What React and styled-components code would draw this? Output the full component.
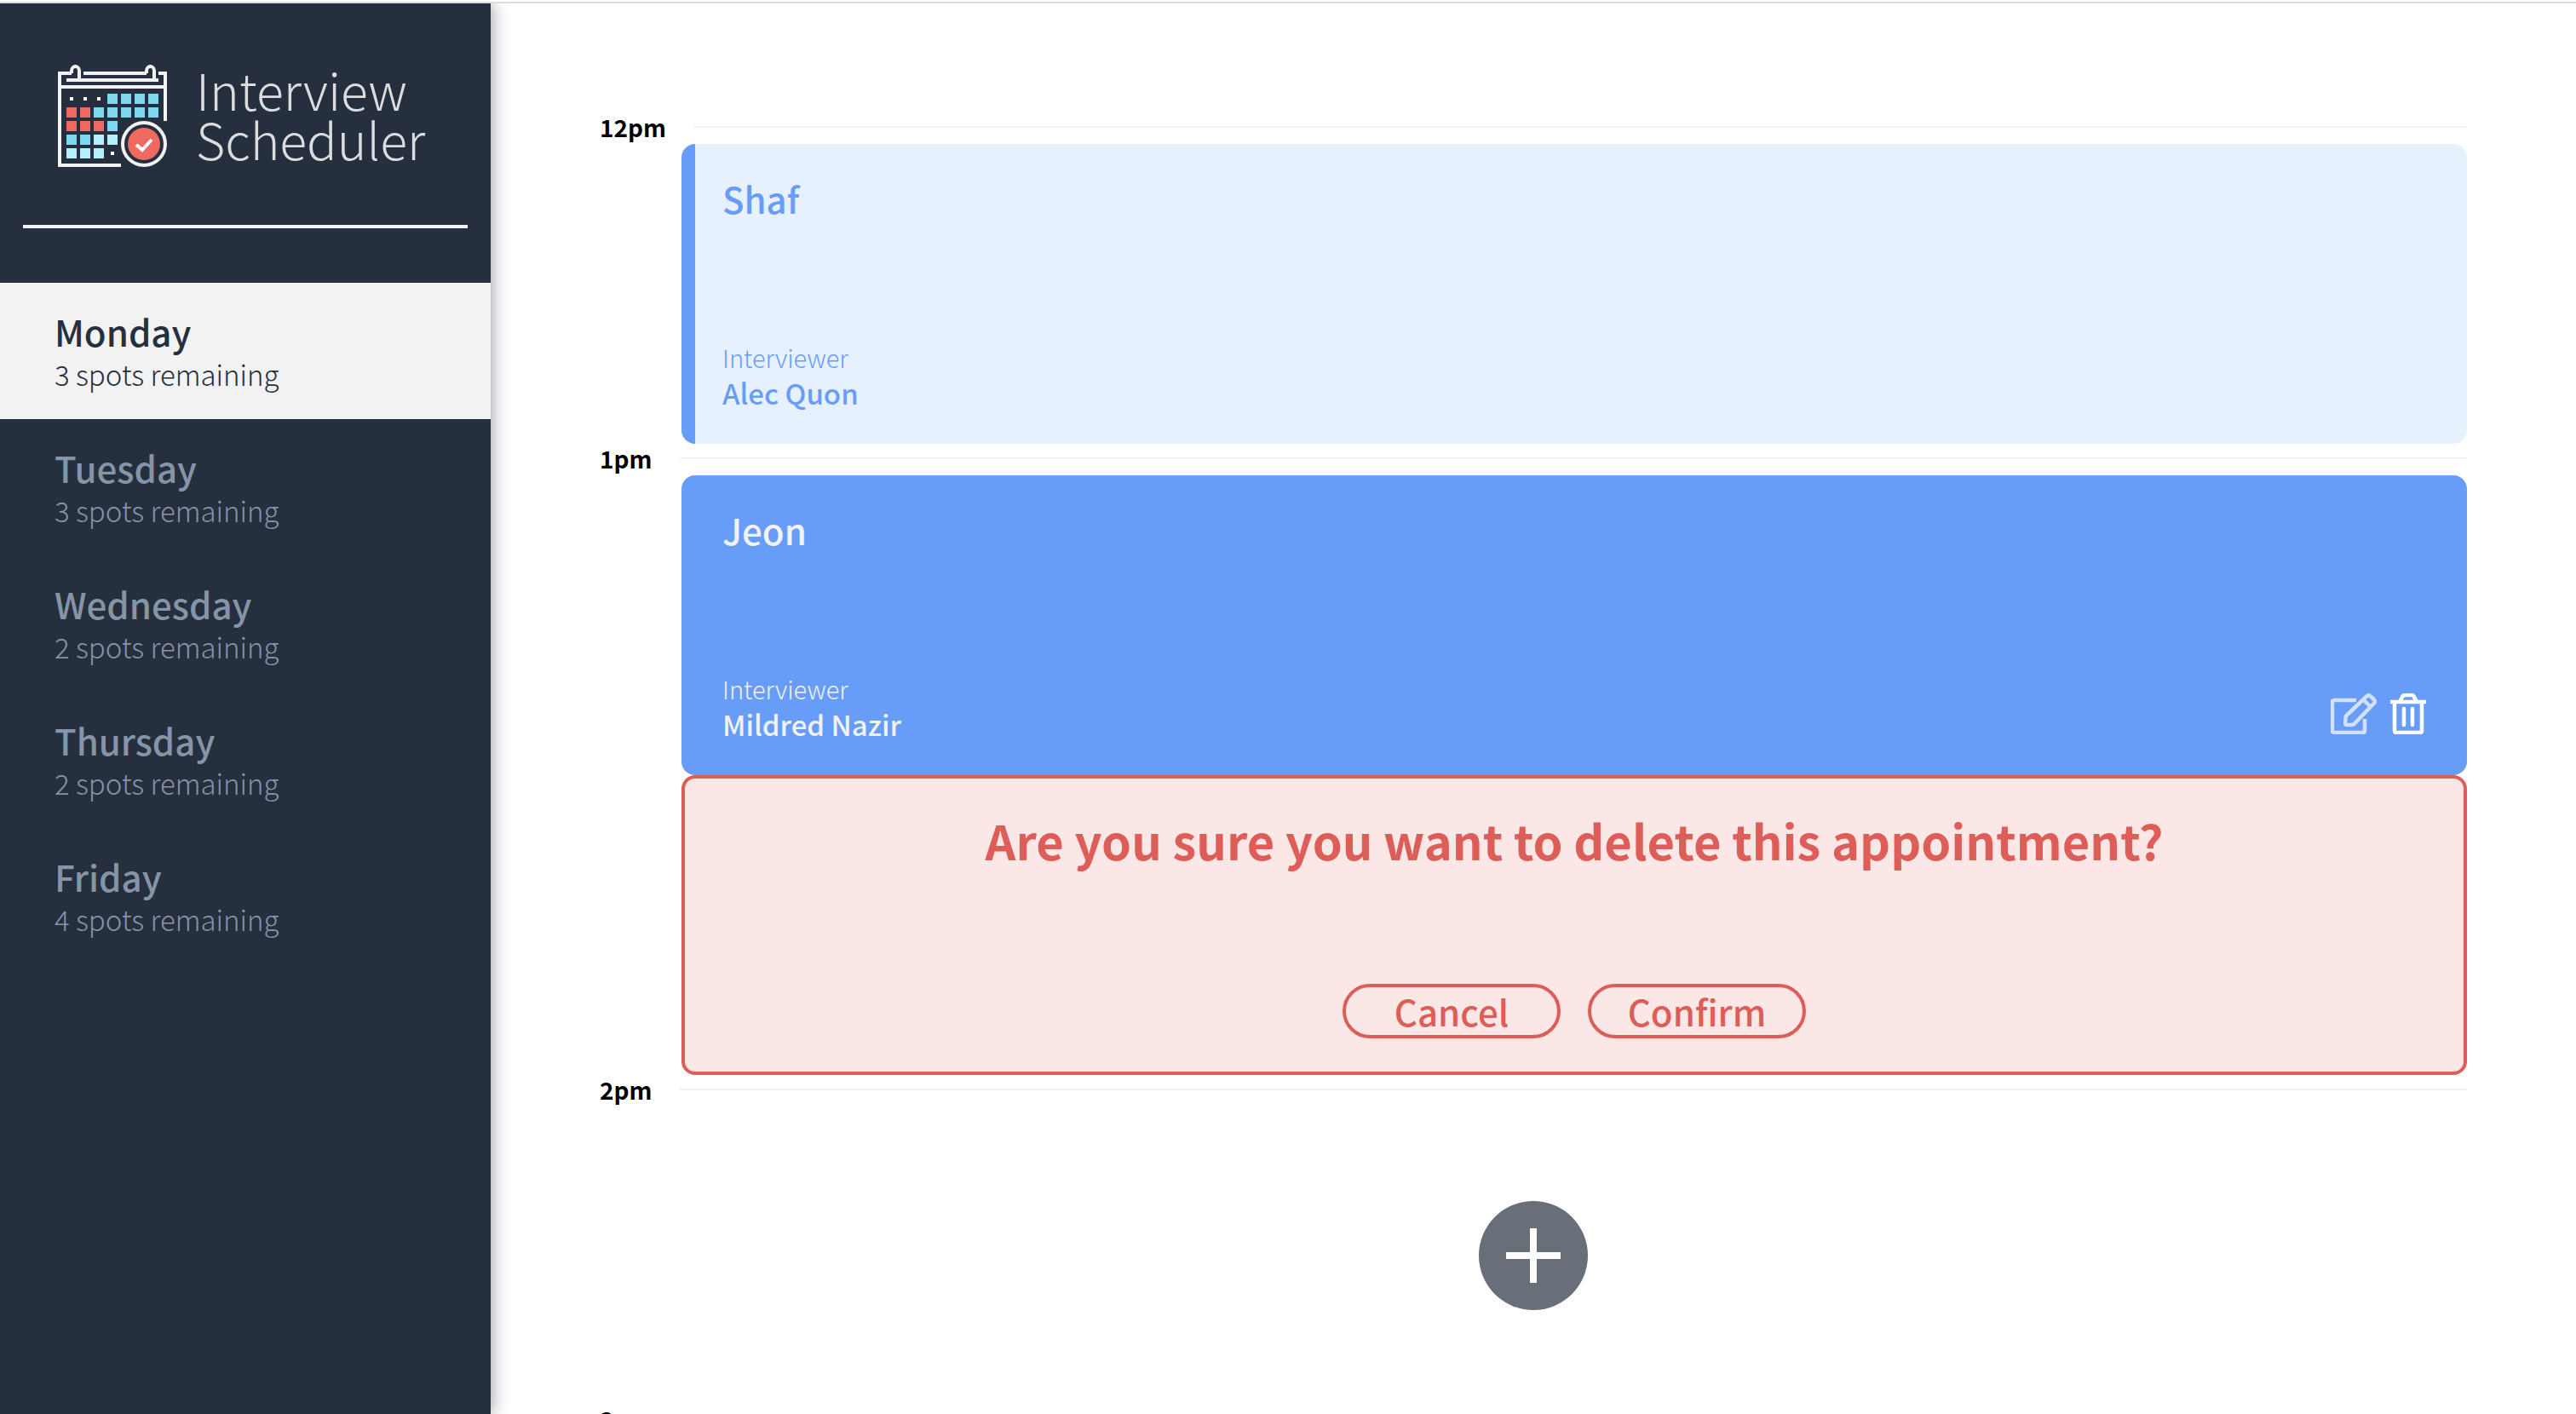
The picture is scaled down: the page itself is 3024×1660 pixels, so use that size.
import React, { useState } from "react";
import styled, { createGlobalStyle, css } from "styled-components";

const color = {
  navy: "#252f3e",
  mist: "#f2f2f2",
  slate: "#8594a7",
  blue: "#679df8",
  sky: "#e7f1fe",
  red: "#dd5d58",
  blush: "#fae7e6",
};

const GlobalStyle = createGlobalStyle`
  *, *::before, *::after { box-sizing: border-box; }
  html, body, #root { height: 100%; }
  body {
    margin: 0;
    padding-top: 2px;
    background: #fff;
    color: #000;
    font-family: "Noto Sans CJK SC", "Noto Sans", sans-serif;
    overflow: hidden;
  }
  h1, h2, h3, h4, p, ul { margin: 0; padding: 0; }
  button { font: inherit; color: inherit; cursor: pointer; }
`;

const Layout = styled.div`
  display: flex;
  height: 100%;
  border-top: 2px solid #dcdcdc;
  overflow: hidden;
`;

const Sidebar = styled.aside`
  flex: none;
  width: 576px;
  background: ${color.navy};
  box-shadow: 2px 0 18px rgba(37, 47, 62, 0.45);
  z-index: 1;
`;

const Brand = styled.h1`
  display: flex;
  align-items: flex-start;
  gap: 34px;
  padding: 72px 64px 68px 68px;
  color: #dcdde0;
  font-size: 59px;
  font-weight: 300;
  line-height: 58px;
`;

const BrandWord = styled.span`
  display: block;
`;

const Divider = styled.hr`
  height: 4px;
  margin: 0 27px 64px;
  border: 0;
  background: ${color.mist};
`;

const DayList = styled.ul`
  list-style: none;
`;

const DayButton = styled.button`
  display: block;
  width: 100%;
  height: 160px;
  padding: 32px 64px;
  border: 0;
  text-align: left;
  background: ${(p) => (p.$selected ? color.mist : "transparent")};
  color: ${(p) => (p.$selected ? color.navy : color.slate)};
`;

const DayName = styled.span`
  display: block;
  font-size: 42px;
  font-weight: 500;
  line-height: 50px;
`;

const DaySpots = styled.span`
  display: block;
  font-size: 33px;
  font-weight: 300;
  line-height: 50px;
`;

const Schedule = styled.main`
  flex: 1;
  min-width: 0;
  padding: 128px 128px 0;
  overflow: hidden;
`;

const Slot = styled.article`
  display: block;
`;

const SlotHeader = styled.header`
  display: flex;
  align-items: center;
  gap: 32px;
  height: 37px;
  padding-bottom: 3px;
`;

const Time = styled.h2`
  font-size: 28px;
  font-weight: 700;
  line-height: 34px;
`;

const Rule = styled.hr`
  flex: 1;
  height: 2px;
  margin: 0;
  border: 0;
  background: ${color.mist};
`;

const card = css`
  display: flex;
  flex-direction: column;
  justify-content: space-between;
  height: 352px;
  margin-left: 96px;
  border-radius: 16px;
`;

const Card = styled.section`
  ${card}
  padding: 32px 48px 38px;
  background: ${(p) => (p.$active ? color.blue : color.sky)};
  color: ${(p) => (p.$active ? color.mist : color.blue)};
  ${(p) =>
    !p.$active &&
    css`
      padding-left: 32px;
      border-left: 16px solid ${color.blue};
    `}
`;

const Student = styled.h3`
  font-size: 42px;
  font-weight: 500;
  line-height: 64px;
`;

const CardFooter = styled.div`
  display: flex;
  align-items: flex-end;
  justify-content: space-between;
`;

const Label = styled.h4`
  font-size: 29px;
  font-weight: 300;
  line-height: 40px;
`;

const Interviewer = styled.p`
  font-size: 33px;
  font-weight: 500;
  line-height: 44px;
`;

const Actions = styled.div`
  display: flex;
  gap: 16px;
  padding-bottom: 10px;
`;

const IconButton = styled.button`
  display: flex;
  padding: 0;
  border: 0;
  background: none;
  color: #fff;
  opacity: ${(p) => (p.$hovered ? 1 : 0.7)};
`;

const ConfirmCard = styled.section`
  ${card}
  align-items: center;
  padding: 32px 48px 39px;
  border: 4px solid ${color.red};
  background: ${color.blush};
  color: ${color.red};
`;

const Question = styled.h3`
  font-size: 56px;
  font-weight: 700;
  line-height: 80px;
`;

const Choices = styled.div`
  display: flex;
  gap: 32px;
`;

const Choice = styled.button`
  width: 256px;
  height: 64px;
  padding: 0;
  border: 4px solid ${color.red};
  border-radius: 32px;
  background: none;
  font-size: 42px;
  font-weight: 500;
  line-height: 56px;
`;

const EmptySlot = styled.section`
  display: flex;
  align-items: center;
  justify-content: center;
  height: 350px;
`;

const AddButton = styled.button`
  display: flex;
  padding: 0;
  border: 0;
  border-radius: 50%;
  background: none;
`;

const cells = [
  "...bbbb",
  "rrbbbbb",
  "rrrb",
  "bbll",
  "lll.",
];
const cellFill = { r: "#ee6a61", b: "#7cd8ef", l: "#b7eefb" };

function CalendarLogo() {
  return (
    <svg width="128" height="120" viewBox="0 0 128 120" fill="none" aria-hidden="true">
      <g stroke={color.mist} strokeWidth="4">
        <path d="M16 10H2v108h72M30 10h74M118 10h8v56M10 18h108M2 26h124" />
        <path d="M16 10V7a4.500 5 0 0 1 9 0v11M104 10V7a4.500 5 0 0 1 9 0v11" />
        <circle cx="101" cy="93" r="25" />
      </g>
      {cells.map((row, y) =>
        [...row].map((c, x) =>
          c === "." ? (
            <rect key={`${x}-${y}`} x={14 + x * 16} y={38 + y * 16} width="4" height="4" fill="#fff" />
          ) : (
            <rect key={`${x}-${y}`} x={10 + x * 16} y={34 + y * 16} width="12" height="12" fill={cellFill[c]} />
          )
        )
      )}
      <circle cx="101" cy="93" r="19" fill="#ee6a61" />
      <path d="M92 94l7 6 11-12" stroke="#fff" strokeWidth="4" />
    </svg>
  );
}

function EditIcon() {
  return (
    <svg
      width="54"
      height="48"
      viewBox="0 0 54 48"
      fill="none"
      stroke="currentColor"
      strokeWidth="4.500"
      strokeLinejoin="round"
      aria-hidden="true"
    >
      <path d="M30 8H4.500Q2 8 2 10.500V43.500Q2 46 4.500 46H37.500Q40 46 40 43.500V30" />
      <path d="M18.500 26L42.500 3.200Q44.500 1.500 46.500 3.200L51 7.500Q52.700 9.500 51 11.500L28 35.500Q26.500 37 24.500 37H19Q17 37 17.200 35L17.500 28.500Q17.600 27 18.500 26Z" />
      <path d="M38.500 7.500L46.500 15.500" />
    </svg>
  );
}

function TrashIcon() {
  return (
    <svg
      width="42"
      height="48"
      viewBox="0 0 42 48"
      fill="none"
      stroke="currentColor"
      strokeWidth="4.500"
      aria-hidden="true"
    >
      <path d="M0 10H42" />
      <path d="M11.500 9L14.500 3.500Q15.500 2 17 2H25Q26.500 2 27.500 3.500L30.500 9" />
      <path d="M5 10V43.500Q5 46 7.500 46H34.500Q37 46 37 43.500V10" />
      <path d="M16 18V37M26 18V37" strokeLinecap="round" />
    </svg>
  );
}

function PlusIcon() {
  return (
    <svg width="128" height="128" viewBox="0 0 128 128" aria-hidden="true">
      <circle cx="64" cy="64" r="64" fill="#686f79" />
      <path d="M64 32v64M32 64h64" stroke="#fff" strokeWidth="8" />
    </svg>
  );
}

const days = [
  ["Monday", 3],
  ["Tuesday", 3],
  ["Wednesday", 2],
  ["Thursday", 2],
  ["Friday", 4],
];

function Hour({ time, children }) {
  return (
    <Slot>
      <SlotHeader>
        <Time>{time}</Time>
        <Rule />
      </SlotHeader>
      {children}
    </Slot>
  );
}

function Appointment({ student, interviewer, active }) {
  return (
    <Card $active={active}>
      <Student>{student}</Student>
      <CardFooter>
        <div>
          <Label>Interviewer</Label>
          <Interviewer>{interviewer}</Interviewer>
        </div>
        {active && (
          <Actions>
            <IconButton aria-label="Edit">
              <EditIcon />
            </IconButton>
            <IconButton aria-label="Delete" $hovered>
              <TrashIcon />
            </IconButton>
          </Actions>
        )}
      </CardFooter>
    </Card>
  );
}

export default function App() {
  const [day, setDay] = useState("Monday");
  return (
    <>
      <GlobalStyle />
      <Layout>
        <Sidebar>
          <Brand>
            <CalendarLogo />
            <span>
              <BrandWord>Interview</BrandWord>
              <BrandWord>Scheduler</BrandWord>
            </span>
          </Brand>
          <Divider />
          <nav>
            <DayList>
              {days.map(([name, spots]) => (
                <li key={name}>
                  <DayButton $selected={name === day} onClick={() => setDay(name)}>
                    <DayName>{name}</DayName>
                    <DaySpots>{spots} spots remaining</DaySpots>
                  </DayButton>
                </li>
              ))}
            </DayList>
          </nav>
        </Sidebar>
        <Schedule>
          <Hour time="12pm">
            <Appointment student="Shaf" interviewer="Alec Quon" />
          </Hour>
          <Hour time="1pm">
            <Appointment student="Jeon" interviewer="Mildred Nazir" active />
            <ConfirmCard>
              <Question>Are you sure you want to delete this appointment?</Question>
              <Choices>
                <Choice>Cancel</Choice>
                <Choice>Confirm</Choice>
              </Choices>
            </ConfirmCard>
          </Hour>
          <Hour time="2pm">
            <EmptySlot>
              <AddButton aria-label="Add">
                <PlusIcon />
              </AddButton>
            </EmptySlot>
          </Hour>
          <Hour time="3pm" />
        </Schedule>
      </Layout>
    </>
  );
}
